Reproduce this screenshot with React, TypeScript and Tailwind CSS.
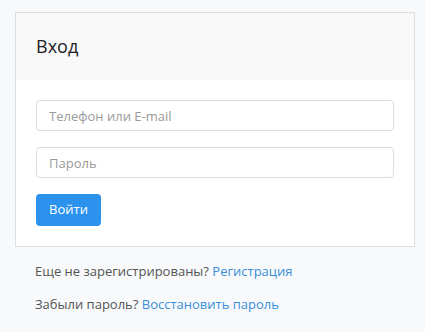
export default function App() {
  return (
    <div className="min-h-[332px] bg-[#f7f9fb] px-[15px] pt-3 font-['Open_Sans',sans-serif] text-[13px] text-[#555]">
      <div className="w-[400px] border border-[#dcdfe2] bg-white">
        <div className="flex h-[67px] items-center bg-[#f9f9f9] px-5">
          <h1 className="text-[18px] text-[#222]">Вход</h1>
        </div>
        <form className="flex flex-col p-5">
          <input
            type="text"
            placeholder="Телефон или E-mail"
            className="h-[31px] w-full rounded border border-[#dcdcdc] px-3 text-[13px] placeholder:text-[#9a9a9a] outline-none"
          />
          <input
            type="password"
            placeholder="Пароль"
            className="mt-4 h-[31px] w-full rounded border border-[#dcdcdc] px-3 text-[13px] placeholder:text-[#9a9a9a] outline-none"
          />
          <button
            type="button"
            className="mt-4 h-8 w-[65px] rounded bg-[#2b92ee] text-[13px] text-white"
          >
            Войти
          </button>
        </form>
      </div>
      <div className="flex flex-col gap-[14px] px-5 pt-[15px]">
        <p className="leading-[19px]">
          Еще не зарегистрированы? <a href="#" className="text-[#3a8fd8]">Регистрация</a>
        </p>
        <p className="leading-[19px]">
          Забыли пароль? <a href="#" className="text-[#3a8fd8]">Восстановить пароль</a>
        </p>
      </div>
    </div>
  )
}
